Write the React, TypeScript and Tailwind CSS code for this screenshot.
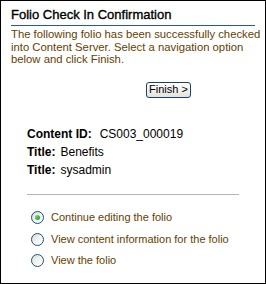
import React from "react"

const options = [
  { label: "Continue editing the folio", checked: true },
  { label: "View content information for the folio", checked: false },
  { label: "View the folio", checked: false },
]

const details = [
  { label: "Content ID:", value: "CS003_000019", gap: "ml-[8px]" },
  { label: "Title:", value: "Benefits", gap: "ml-[5px]" },
  { label: "Title:", value: "sysadmin", gap: "ml-[5px]" },
]

function Radio({ checked }: { checked: boolean }) {
  return (
    <span className="flex h-[13px] w-[13px] shrink-0 items-center justify-center rounded-full border border-[#1c5180] bg-gradient-to-br from-[#dcdcd4] via-[#f2f2ee] to-white">
      {checked && (
        <span className="h-[5px] w-[5px] rounded-full bg-gradient-to-br from-[#6fe36f] to-[#1d9a1d]" />
      )}
    </span>
  )
}

export default function App() {
  return (
    <div className="h-[284px] w-[266px] border border-black bg-white px-[10px] pt-[6px] font-['Liberation_Sans',Arial,sans-serif]">
      {/* Header */}
      <h1 className="border-b border-[#2a5a8a] pb-[2px] text-[13px] font-normal leading-[16px] text-black [-webkit-text-stroke:0.35px_black]">
        Folio Check In Confirmation
      </h1>
      <p className="mt-[2px] whitespace-nowrap text-[11.3px] leading-[12.5px] text-[#634200]">
        The following folio has been successfully checked
        <br />
        into Content Server. Select a navigation option
        <br />
        below and click Finish.
      </p>

      {/* Finish */}
      <div className="mt-[16px] pl-[135px]">
        <button className="flex h-[16px] w-[45px] items-center justify-center rounded-[3px] border border-[#1c3f78] bg-gradient-to-b from-white to-[#e3e3dc] text-[11px] leading-none text-black">
          Finish &gt;
        </button>
      </div>

      {/* Details */}
      <div className="mt-[27px] pl-[16px]">
        {details.map((d, i) => (
          <div key={i} className="flex h-[18px] items-center">
            <span className="text-[12px] font-bold text-black">{d.label}</span>
            <span className={`${d.gap} text-[12px] text-black`}>{d.value}</span>
          </div>
        ))}
      </div>

      <div className="mx-[16px] mt-[15px] h-px bg-[#b4b4b4]" />

      {/* Options */}
      <div className="mt-[12px] pl-[20px]">
        {options.map((o, i) => (
          <label key={i} className="flex h-[21.7px] items-center gap-[7px]">
            <Radio checked={o.checked} />
            <span className="text-[11px] text-[#634200]">{o.label}</span>
          </label>
        ))}
      </div>
    </div>
  )
}
